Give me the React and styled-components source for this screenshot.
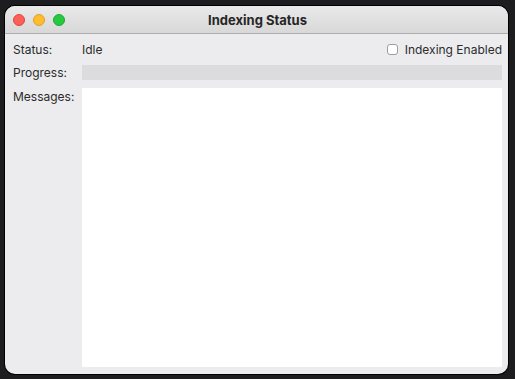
import React from 'react';
import styled, { createGlobalStyle } from 'styled-components';

const GlobalStyle = createGlobalStyle`
  html, body, #root {
    margin: 0;
    height: 100%;
  }

  body {
    background: #1d1d1f;
    font-family: Inter, "Liberation Sans", sans-serif;
  }
`;

const App = () => {
  return (
    <>
      <GlobalStyle />
      <Page>
        <Window>
          <TitleBar>
            <Lights>
              <Light color="#fe5f57" edge="#e0443e" />
              <Light color="#febc2e" edge="#dea123" />
              <Light color="#28c840" edge="#1aab29" />
            </Lights>
            <Title>Indexing Status</Title>
          </TitleBar>
          <Body>
            <Label>Status:</Label>
            <StatusRow>
              <Value>Idle</Value>
              <CheckLabel>
                <CheckBox />
                Indexing Enabled
              </CheckLabel>
            </StatusRow>
            <Label>Progress:</Label>
            <ProgressTrack />
            <Label top>Messages:</Label>
            <MessageArea />
          </Body>
        </Window>
      </Page>
    </>
  );
};

export default App;

const Page = styled.div`
  box-sizing: border-box;
  height: 100vh;
  padding: 6px 7px 5px 5px;
  display: flex;
`;

const Window = styled.div`
  flex: 1;
  display: flex;
  flex-direction: column;
  background: #ececee;
  border-radius: 10px;
  overflow: hidden;
  box-shadow: 0 0 0 1px #000;
`;

const TitleBar = styled.div`
  position: relative;
  height: 27px;
  flex-shrink: 0;
  display: flex;
  align-items: center;
  justify-content: center;
  background: linear-gradient(#e9e9e9, #d8d8d8);
  border-bottom: 1px solid #aeaeae;
`;

const Lights = styled.div`
  position: absolute;
  left: 8px;
  top: 8px;
  display: flex;
  gap: 8px;
`;

const Light = styled.span`
  width: 12px;
  height: 12px;
  border-radius: 50%;
  box-sizing: border-box;
  background: ${(p) => p.color};
  border: 0.5px solid ${(p) => p.edge};
`;

const Title = styled.div`
  font-size: 13px;
  font-weight: 700;
  color: #262626;
  margin-left: 2px;
`;

const Body = styled.div`
  flex: 1;
  min-height: 0;
  display: grid;
  grid-template-columns: 69px 1fr;
  grid-template-rows: 16px 15px 1fr;
  row-gap: 8px;
  padding: 7px 6px 7px 8px;
`;

const Label = styled.div`
  font-size: 12px;
  color: #2b2b2b;
  display: flex;
  align-items: ${(p) => (p.top ? 'flex-start' : 'center')};
  padding-top: ${(p) => (p.top ? '1px' : '0')};
`;

const StatusRow = styled.div`
  display: flex;
  align-items: center;
  justify-content: space-between;
`;

const Value = styled.span`
  font-size: 12px;
  color: #2b2b2b;
`;

const CheckLabel = styled.label`
  display: flex;
  align-items: center;
  gap: 7px;
  font-size: 12px;
  color: #2b2b2b;
`;

const CheckBox = styled.span`
  width: 11px;
  height: 11px;
  box-sizing: border-box;
  background: #fff;
  border: 1px solid #9d9d9f;
  border-radius: 3px;
`;

const ProgressTrack = styled.div`
  background: #dcdcde;
`;

const MessageArea = styled.div`
  background: #fff;
`;
